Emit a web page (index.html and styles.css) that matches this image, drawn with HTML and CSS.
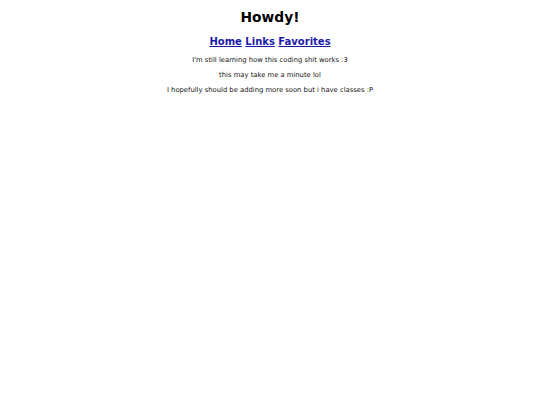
FILE: index.html
```html
<!DOCTYPE html>
<html>
<head>
<meta charset="utf-8">
<link rel="stylesheet" href="styles.css">
</head>
<body>
<div class="page">
<h1 class="title">Howdy!</h1>
<nav class="nav"><a href="#">Home</a> <a href="#">Links</a> <a href="#">Favorites</a></nav>
<p class="line">I'm still learning how this coding shit works :3</p>
<p class="line">this may take me a minute lol</p>
<p class="line">I hopefully should be adding more soon but i have classes :P</p>
</div>
</body>
</html>
```
FILE: styles.css
```css
body { margin: 0; background: #fff; font-family: "DejaVu Sans", Verdana, sans-serif; color: #000; }
.page { text-align: center; padding-top: 9px; }
.title { font-size: 13.8px; font-weight: bold; margin: 0; line-height: 17px; }
.nav { font-size: 10px; font-weight: bold; margin-top: 9px; line-height: 14px; }
.nav a { color: #1a1aaa; text-decoration: underline; }
.line { font-size: 6.8px; margin: 0; margin-top: 7px; line-height: 8px; color: #111; }
```
